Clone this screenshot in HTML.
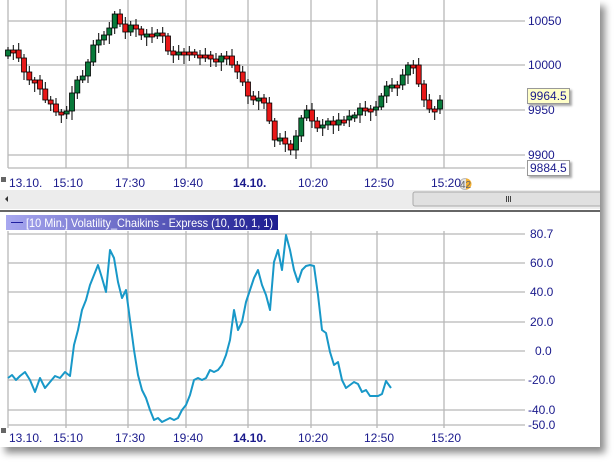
<!DOCTYPE html><html><head><style>
body{margin:0;width:616px;height:466px;background:#fff;overflow:hidden;font-family:"Liberation Sans",sans-serif}
#win{position:absolute;left:0;top:0;width:600px;height:447px;background:#fff;box-shadow:5px 6px 7px rgba(0,0,0,.45)}
.l{position:absolute;font-size:12px;color:#1a1a8c;line-height:12px}
</style></head><body>
<div id="win">
<svg width="600" height="447" style="position:absolute;left:0;top:0" id="s">
<g stroke="#b8b8b8" stroke-width="1.3" fill="none">
<path d="M8 0V168M66 0V168M128 0V168M186 0V168M248 0V168M311 0V168M377 0V168M444 0V168"/>
<path d="M8 21H525M8 65H525M8 110H525M8 155H525M8 168H525"/>
<path d="M8 231V428M66 231V428M128 231V428M186 231V428M248 231V428M311 231V428M377 231V428M444 231V428"/>
<path d="M8 234H525M8 263H525M8 292H525M8 322H525M8 351H525M8 380H525M8 410H525M8 425H525"/>
</g>
<rect x="0" y="190" width="600" height="19" fill="#ececec"/>
<rect x="413" y="192" width="190" height="14" rx="2" fill="#e0e0e0" stroke="#aaa"/>
<path d="M506.5 196v6M508.5 196v6M510.5 196v6" stroke="#444"/>
<path d="M8 196l-3 3 3 3z" fill="#333"/>
<rect x="0" y="210" width="600" height="2" fill="#666"/>
<defs><linearGradient id="g" x1="0" x2="1"><stop offset="0" stop-color="#a8a8f0"/><stop offset="1" stop-color="#1c1c90"/></linearGradient></defs>
<rect x="6" y="215" width="272" height="15" fill="url(#g)"/>
<path d="M11 222.5H23" stroke="#2020a0"/>
<text x="26" y="227" font-size="12" fill="#fff" font-family="Liberation Sans" textLength="247" lengthAdjust="spacingAndGlyphs">[10 Min.] Volatility_Chaikins - Express  (10, 10, 1, 1)</text>
<g id="c"></g>
<polyline fill="none" stroke="#1898c8" stroke-width="2" stroke-linejoin="round" points="8,378 12,375 16,380 20,376 25,372 30,380 35,392 40,378 45,388 50,382 55,376 60,378 65,372 70,376 74,345 78,330 82,310 86,300 90,285 94,275 98,265 102,278 106,292 110,250 114,258 118,282 122,298 126,290 130,320 134,350 138,375 142,390 146,398 150,410 154,420 158,418 162,422 166,420 170,418 174,420 178,418 182,410 186,405 190,395 194,380 198,378 202,380 206,378 210,370 214,372 218,370 222,365 226,355 230,340 234,310 238,330 242,322 246,302 250,290 254,278 258,270 262,285 266,295 270,310 274,262 278,250 282,270 286,235 290,250 294,270 298,282 302,270 306,266 310,265 314,266 318,295 322,330 326,333 330,352 334,365 338,362 342,380 346,388 350,385 354,382 358,384 362,392 366,390 370,396 378,396 382,394 386,381 391,388"/>
<circle cx="465" cy="184" r="5.5" fill="#e4e4e4" stroke="#bbb"/><path d="M466 178.5a5.5 5.5 0 0 1 0 11z" fill="#f5b030"/>
<text x="460" y="188" font-size="10" fill="#666">42</text>
<rect x="1" y="177" width="5" height="5" fill="#666"/><rect x="1" y="428" width="5" height="5" fill="#666"/>
</svg>
<div class="l" style="left:528px;top:15px">10050</div>
<div class="l" style="left:528px;top:59px">10000</div>
<div class="l" style="left:528px;top:104px">9950</div>
<div class="l" style="left:528px;top:149px">9900</div>
<div class="l" style="left:527px;top:88px;background:#ffffc8;border:1px solid #999;padding:1px 2px;box-shadow:2px 2px 2px #aaa">9964.5</div>
<div class="l" style="left:527px;top:160px;background:#fff;border:1px solid #999;padding:1px 2px;box-shadow:2px 2px 2px #aaa">9884.5</div>
<div class="l" style="left:530px;top:228px">80.7</div>
<div class="l" style="left:530px;top:257px">60.0</div>
<div class="l" style="left:530px;top:286px">40.0</div>
<div class="l" style="left:530px;top:316px">20.0</div>
<div class="l" style="left:535px;top:345px">0.0</div>
<div class="l" style="left:528px;top:374px">-20.0</div>
<div class="l" style="left:528px;top:404px">-40.0</div>
<div class="l" style="left:528px;top:419px">-50.0</div>
<div id="ax1"></div>
</div>
<script>
(function(){
var t=[["13.10.",9],["15:10",53],["17:30",115],["19:40",173],["14.10.",233,1],["10:20",298],["12:50",364],["15:20",431]];
var h="";t.forEach(function(a){h+='<div class="l" style="left:'+a[1]+'px;top:177px;'+(a[2]?'font-weight:bold':'')+'">'+a[0]+'</div>';h+='<div class="l" style="left:'+a[1]+'px;top:432px;'+(a[2]?'font-weight:bold':'')+'">'+a[0]+'</div>';});
document.getElementById("ax1").innerHTML=h;
var ys=[50,48,55,60,72,80,80,80,90,100,102,105,113,113,112,110,90,80,80,72,60,45,45,35,35,30,10,20,25,32,25,25,30,35,33,35,33,33,32,45,55,55,52,52,52,52,55,55,55,55,58,62,62,55,55,60,70,72,80,95,98,100,98,98,110,125,140,135,143,145,150,140,128,112,110,120,125,130,125,120,125,125,120,120,118,115,115,108,108,110,110,108,100,92,85,85,88,82,73,65,62,70,90,100,108,112,108,100];
var N=ys.length,n=82,g="",prev=ys[0]+6;
for(var i=0;i<n;i++){var f=i*(N-1)/(n-1),k=Math.floor(f),fr=f-k;var c=Math.round(ys[k]+(k+1<N?(ys[k+1]-ys[k])*fr:0));
var x=(8+i*(432/(n-1))).toFixed(1);var o=prev;var up=c<o;var tp=Math.min(o,c),bt=Math.max(o,c);if(bt-tp<3)bt=tp+3;
var hi=tp-3-(i*7%5),lo=bt+3+(i*11%7);
g+='<line x1="'+x+'" x2="'+x+'" y1="'+hi+'" y2="'+lo+'" stroke="#000"/>';
g+='<rect x="'+(x-2.5)+'" y="'+tp+'" width="5" height="'+(bt-tp)+'" fill="'+(up?'#087a3a':'#e81818')+'" stroke="#000" stroke-width=".8"/>';
prev=c;}
document.getElementById("c").innerHTML=g;
})();
</script>
</body></html>
